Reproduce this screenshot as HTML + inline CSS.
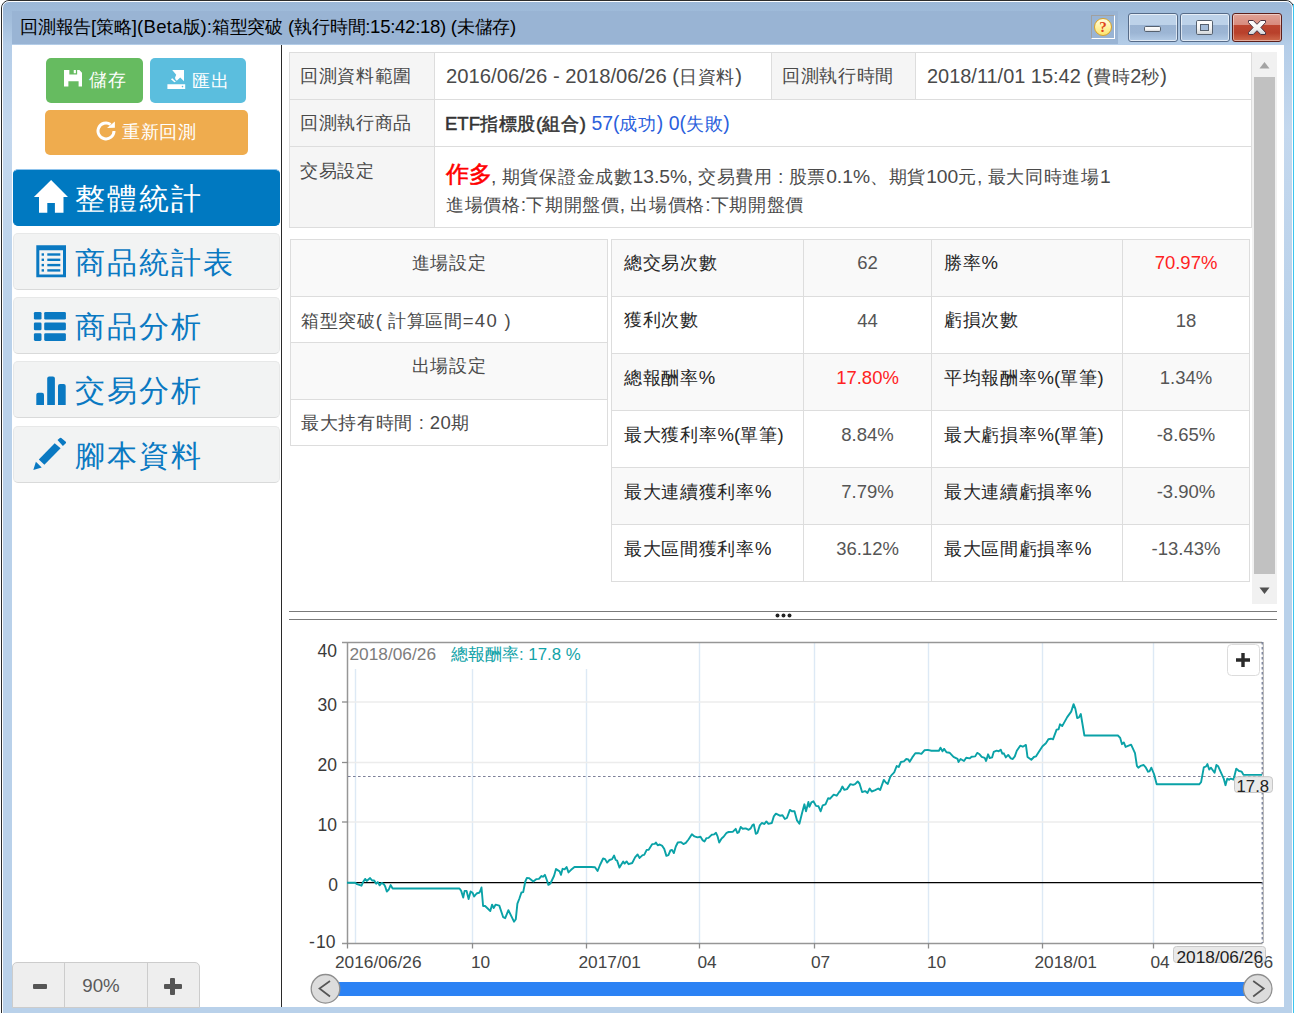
<!DOCTYPE html>
<html lang="zh-Hant">
<head>
<meta charset="utf-8">
<title>回測報告</title>
<style>
*{box-sizing:border-box;margin:0;padding:0}
html,body{width:1294px;height:1013px;overflow:hidden;background:#fff}
body{font-family:"Liberation Sans",sans-serif;color:#333;position:relative}
.abs{position:absolute}
/* ---------- window frame ---------- */
#frame{position:absolute;left:1px;top:0;width:1293px;height:1030px;border:1px solid #2b2b2b;border-radius:8px 8px 0 0;
 background:linear-gradient(180deg,#9bb7d7 0px,#a3bedc 20px,#b4cde8 44px,#c4d8ee 130px,#b9d1ea 330px,#b9d1ea 100%)}
#frame:before{content:"";position:absolute;left:0;top:0;right:0;bottom:0;border:1px solid #fdfeff;border-radius:7px 7px 0 0}
#cap{position:absolute;left:12px;top:11px;width:1106px;height:33px;background:#99b4d4}
#ttl{position:absolute;left:20px;top:14px;height:26px;line-height:26px;font-size:17.5px;color:#000;white-space:nowrap;letter-spacing:-0.25px}
#ttl .e{font-size:18.6px;letter-spacing:0}
#content{position:absolute;left:12px;top:45px;width:1272px;height:962px;background:#fff}
/* caption buttons */
.cb{position:absolute;top:13px;height:29px;width:50px;border:1px solid #566b88;border-radius:3px;
 background:linear-gradient(180deg,#bdd2e9 0,#bdd2e9 40%,#9ab3d2 41%,#9cb5d4 70%,#b3cbe6 100%);box-shadow:inset 0 0 0 1px rgba(255,255,255,.62)}
#bx{background:linear-gradient(180deg,#e0a296 0,#d88b7d 40%,#bd4630 41%,#b8402b 70%,#cf6a4c 100%);border-color:#5d1f1a;box-shadow:inset 0 0 0 1px rgba(255,255,255,.45)}
#help{position:absolute;left:1091px;top:15px;width:24px;height:24px;border:1px solid;border-color:#a0a0a0 #fff #fff #a0a0a0;background:#99b4d4}
#help i{position:absolute;left:2px;top:2px;width:18px;height:18px;border-radius:50%;border:1px solid #dba226;
 background:linear-gradient(180deg,#fffde0 0,#fff3a8 45%,#fde56f 100%);font:bold 15px/17px "Liberation Serif",serif;color:#e0421b;text-align:center;font-style:normal}
/* ---------- sidebar ---------- */
#sidediv{position:absolute;left:281px;top:45px;width:1px;height:962px;background:#2a2a2a}
.btn{position:absolute;height:45px;border-radius:5px;color:#fff;font-size:18px;letter-spacing:.7px;line-height:45px;white-space:nowrap}
.btn span{position:absolute;top:0}
.nav{position:absolute;left:13px;width:267px;height:57px;border-radius:5px;border:1px solid #e7e8e8;border-bottom-color:#d9dada;background:#f2f3f3;color:#0a79c2;font-size:30px;letter-spacing:2px;line-height:57px;white-space:nowrap}
.nav.on{background:#0079c1;border-color:#8fc3ec #0079c1 #0079c1;color:#fff}
.nav span{position:absolute;left:61px;top:0}
.nav svg{position:absolute;left:-1px;top:0}
.nav.on svg{top:-1px}
#zoomc{position:absolute;left:12px;top:962px;width:188px;height:46px;border:1px solid #ccc;border-radius:5px 5px 0 0;background:#eee}
#zoomc div{position:absolute;top:0;height:45px}
</style>
</head>
<body>
<div id="frame"></div>
<div id="cap"></div>
<div id="ttl">回測報告<span class="e">[</span>策略<span class="e" style="letter-spacing:.25px">](Beta</span>版<span class="e">):</span>箱型突破<span class="e"> (</span>執行時間<span class="e" style="letter-spacing:-.3px">:15:42:18) (</span>未儲存<span class="e">)</span></div>
<div id="help"><i>?</i></div>
<div class="cb" id="bmin" style="left:1128px"><svg width="48" height="27" style="position:absolute;left:0;top:0"><defs><linearGradient id="gw" x1="0" y1="0" x2="0" y2="1"><stop offset="0" stop-color="#fff"/><stop offset=".55" stop-color="#f4f4f4"/><stop offset="1" stop-color="#cfd3d8"/></linearGradient></defs><rect x="15.5" y="12.500" width="16" height="5" rx="1.200" fill="url(#gw)" stroke="#55606e" stroke-width="1"/></svg></div>
<div class="cb" id="bmax" style="left:1180px"><svg width="48" height="27" style="position:absolute;left:0;top:0"><rect x="15.500" y="6.500" width="16" height="14" rx="1.200" fill="url(#gw)" stroke="#55606e"/><rect x="19.500" y="10.500" width="8" height="6" fill="#a3bbd8" stroke="#55606e"/></svg></div>
<div class="cb" id="bx" style="left:1232px"><svg width="48" height="27" style="position:absolute;left:0;top:0"><path d="M15.5 6.5H20.3L24 10.3L27.7 6.5H32.5V8.600L27.900 13.500L32.500 18.400V20.500H27.700L24 16.700L20.300 20.500H15.500V18.400L20.100 13.500L15.500 8.600Z" fill="url(#gw)" stroke="#4c3340" stroke-width="1" stroke-linejoin="round"/></svg></div>
<div class="abs" style="left:1293px;top:4px;width:1px;height:1010px;background:#3cc5ef"></div>
<div id="content"></div>
<div id="sidediv"></div>

<!-- sidebar buttons -->
<div class="btn" style="left:46px;top:58px;width:97px;background:#66bb60">
 <svg class="abs" style="left:17.500px;top:12px" width="18.500" height="16.600" viewBox="0 0 19 17"><path d="M0 0H5.500V4.600H13.500V0H15.800L19 3.200V17H15V11.500H4.500V17H0Z M10 0H12.200V3.400H10Z" fill="#fff"/></svg>
 <span style="left:43px">儲存</span></div>
<div class="btn" style="left:150px;top:58px;width:96px;background:#5bbede">
 <svg class="abs" style="left:17px;top:12px" width="19" height="19" viewBox="0 0 19 19"><path d="M5.200 0H17V11.300L13.200 7.600L9.800 10.700L8.500 9.400L8 7.700L9.200 4.700Z M5.300 8.200L8.900 11.800L7.400 12.200L3.900 9.300Z M0.400 14.300H18.200V19H0.400Z" fill="#fff"/><circle cx="15.500" cy="16.600" r="0.800" fill="#5bbede"/></svg>
 <span style="left:42px;top:1px">匯出</span></div>
<div class="btn" style="left:45px;top:110px;width:203px;background:#efac4e">
 <svg class="abs" style="left:51px;top:11.4px" width="20" height="20" viewBox="0 0 20 20"><path d="M18 10A8 8 0 1 1 14.600 3.450" fill="none" stroke="#fff" stroke-width="3"/><path d="M18.900 0.400V6.700L11 7Z" fill="#fff"/></svg>
 <span style="left:77px">重新回測</span></div>

<!-- nav -->
<div class="nav on" style="top:169px"><svg width="70" height="57"><path d="M38.100 11 L55 27.900 H50.500 V43.800 H41.900 V34 H34.300 V43.800 H26 V27.900 H20.900 Z" fill="#fff"/></svg><span>整體統計</span></div>
<div class="nav" style="top:233px"><svg width="70" height="57"><path d="M23.300 11.200H53V43.200H23.300Z M26.300 16.200V40.400H50V16.200Z" fill="#0a79c2" fill-rule="evenodd"/><g fill="#0a79c2"><rect x="28.600" y="19.300" width="2.400" height="2.400"/><rect x="34.300" y="19.300" width="13" height="2.400"/><rect x="28.600" y="24.600" width="2.400" height="2.400"/><rect x="34.300" y="24.600" width="13" height="2.400"/><rect x="28.600" y="29.900" width="2.400" height="2.400"/><rect x="34.300" y="29.900" width="13" height="2.400"/><rect x="28.600" y="35.200" width="2.400" height="2.400"/><rect x="34.300" y="35.200" width="13" height="2.400"/></g></svg><span>商品統計表</span></div>
<div class="nav" style="top:297px"><svg width="70" height="57"><g fill="#0a79c2"><rect x="20.900" y="14" width="7.600" height="7.600" rx="1.300"/><rect x="31.200" y="14" width="21.700" height="7.600" rx="1.300"/><rect x="20.900" y="24.500" width="7.600" height="7.800" rx="1.300"/><rect x="31.200" y="24.500" width="21.700" height="7.800" rx="1.300"/><rect x="20.900" y="35.200" width="7.600" height="7.700" rx="1.300"/><rect x="31.200" y="35.200" width="21.700" height="7.700" rx="1.300"/></g></svg><span>商品分析</span></div>
<div class="nav" style="top:361px"><svg width="70" height="57"><g fill="#0a79c2"><path d="M23.300 43.100V32.800Q23.300 30.800 25.300 30.800H29Q31 30.800 31 32.800V43.100Z"/><path d="M34.200 43.100V16.400Q34.200 14.400 36.200 14.400H39.900Q41.900 14.400 41.900 16.400V43.100Z"/><path d="M45 43.100V24.100Q45 22.100 47 22.100H50.700Q52.700 22.100 52.700 24.100V43.100Z"/></g></svg><span>交易分析</span></div>
<div class="nav" style="top:426px"><svg width="70" height="57" style="top:-1px"><g fill="#0a79c2"><path d="M20.300 43.900L22.900 35.800L28.700 41.500Z"/><path d="M25.800 33.400L41.700 17.200L47.600 22.300L31.400 38.800Z"/><path d="M44.500 14L46.900 11.900Q47.600 11.400 48.300 12L52.800 15.800Q53.400 16.500 52.800 17.200L49.900 20.100Z"/></g></svg><span>腳本資料</span></div>

<!-- zoom control -->
<div id="zoomc">
 <div style="left:51px;width:1px;background:#ccc"></div>
 <div style="left:134px;width:1px;background:#ccc"></div>
 <div style="left:19.500px;top:21px;width:14.500px;height:5px;background:#555;border-radius:1px"></div>
 <div style="left:47px;width:82px;text-align:center;font-size:18.700px;line-height:46px;color:#5a5a5a">90%</div>
 <div style="left:150.800px;top:21px;width:18px;height:5px;background:#555;border-radius:1px"></div>
 <div style="left:157.300px;top:15px;width:5px;height:17px;background:#555;border-radius:1px"></div>
</div>

<!--MAIN-->

<style>
/* ---------- tables ---------- */
.t{position:absolute;border:1px solid #ddd;background:#fff}
.c{position:absolute;font-size:17.6px;letter-spacing:.7px;white-space:nowrap;color:#4a4a4a;overflow:hidden}
.c.l{background:#f5f5f5}
.c.h{background:#f9f9f9;text-align:center}
.c.s{background:#f9f9f9}
.e{letter-spacing:0;font-size:18.5px}
.tt .e{font-size:20.25px}
#V2 .e{font-size:19.95px}
.tt .r3 .e{font-size:19.25px}
.tt b.k .e{font-size:18.5px}
.tt .blue .e{font-size:19.4px}
.ls .e{letter-spacing:.4px}
.bl{border-left:1px solid #ddd}.bt{border-top:1px solid #ddd}
.c span.x{position:absolute;left:10px}
.k{font-weight:normal;color:#262626}
b.k{font-weight:normal;color:#333;-webkit-text-stroke:.5px #333}
.v{text-align:center;color:#555}
.red{color:#f22}
.blue{color:#2a60dc}
#sbt{position:absolute;left:1252px;top:52px;width:25px;height:552px;background:#f1f1f1}
#sbth{position:absolute;left:1254px;top:77px;width:21px;height:497px;background:#c1c1c1}
.ln{position:absolute;left:289px;width:988px;height:1px;background:#7a7a7a}
</style>
<div class="t tt" style="left:289px;top:52px;width:963px;height:176px">
<div class="c l" style="left:0px;top:0px;width:144px;height:46px;line-height:46px;"><span class="x">回測資料範圍</span></div>
<div class="c bl" style="left:144px;top:0px;width:337px;height:46px;line-height:46px;"><span class="x" id="V1" style="left:11px"><span class="e">2016/06/26 - 2018/06/26 (</span>日資料<span class="e">)</span></span></div>
<div class="c l bl" style="left:481px;top:0px;width:144px;height:46px;line-height:46px;"><span class="x">回測執行時間</span></div>
<div class="c bl" style="left:625px;top:0px;width:336px;height:46px;line-height:46px;"><span class="x" id="V2" style="left:11px"><span class="e">2018/11/01 15:42 (</span>費時<span class="e">2</span>秒<span class="e">)</span></span></div>
<div class="c l bt" style="left:0px;top:46px;width:144px;height:47px;line-height:47px;"><span class="x">回測執行商品</span></div>
<div class="c bl bt" style="left:144px;top:46px;width:817px;height:47px;line-height:47px;"><span class="x" style="left:10px"><b class="k"><span class="e">ETF</span>指標股<span class="e">(</span>組合<span class="e">)</span></b> <span class="blue"><span class="e">57(</span>成功<span class="e">) 0(</span>失敗<span class="e">)</span></span></span></div>
<div class="c l bt" style="left:0px;top:93px;width:144px;height:81px;line-height:81px;"><span class="x" style="top:10px;line-height:28px">交易設定</span></div>
<div class="c bl bt r3" style="left:144px;top:93px;width:817px;height:81px;line-height:81px;"><span class="x" style="left:11px;top:15px;line-height:27px"><b style="color:#f00;font-size:23px;letter-spacing:-.5px;position:relative;top:-1px;font-weight:normal;-webkit-text-stroke:.55px #f00">作多</b><span class="e">, </span>期貨保證金成數<span class="e">13.5%, </span>交易費用<span class="e"> : </span>股票<span class="e">0.1%</span>、期貨<span class="e">100</span>元<span class="e">, </span>最大同時進場<span class="e">1</span><br>進場價格<span class="e">:</span>下期開盤價<span class="e">, </span>出場價格<span class="e">:</span>下期開盤價</span></div>
</div>
<div class="t ls" style="left:290px;top:239px;width:318px;height:207px">
<div class="c h" style="left:0px;top:0px;width:316px;height:56px;line-height:56px;"><span style="position:relative;top:-5px">進場設定</span></div>
<div class="c bt" style="left:0px;top:56px;width:316px;height:46px;line-height:46px;"><span class="x" style="top:1px">箱型突破<span class="e">( </span>計算區間<span class="e" style="letter-spacing:1.3px">=40 )</span></span></div>
<div class="c h bt" style="left:0px;top:102px;width:316px;height:57px;line-height:57px;"><span style="position:relative;top:-5px">出場設定</span></div>
<div class="c bt" style="left:0px;top:159px;width:316px;height:46px;line-height:46px;"><span class="x">最大持有時間<span class="e"> : 20</span>期</span></div>
</div>
<div class="t" style="left:611px;top:239px;width:639px;height:343px">
<div class="c k s" style="left:0px;top:0px;width:191px;height:56px;line-height:56px;"><span class="x" style="left:12px;top:-5px">總交易次數</span></div>
<div class="c v bl s" style="left:191px;top:0px;width:128px;height:56px;line-height:56px;"><span style="position:relative;top:-5px"><span class="e">62</span></span></div>
<div class="c k bl s" style="left:319px;top:0px;width:191px;height:56px;line-height:56px;"><span class="x" style="left:12px;top:-5px">勝率<span class="e">%</span></span></div>
<div class="c v bl s red" style="left:510px;top:0px;width:127px;height:56px;line-height:56px;"><span style="position:relative;top:-5px"><span class="e">70.97%</span></span></div>
<div class="c k bt" style="left:0px;top:56px;width:191px;height:57px;line-height:57px;"><span class="x" style="left:12px;top:-5px">獲利次數</span></div>
<div class="c v bl bt" style="left:191px;top:56px;width:128px;height:57px;line-height:57px;"><span style="position:relative;top:-5px"><span class="e">44</span></span></div>
<div class="c k bl bt" style="left:319px;top:56px;width:191px;height:57px;line-height:57px;"><span class="x" style="left:12px;top:-5px">虧損次數</span></div>
<div class="c v bl bt" style="left:510px;top:56px;width:127px;height:57px;line-height:57px;"><span style="position:relative;top:-5px"><span class="e">18</span></span></div>
<div class="c k s bt" style="left:0px;top:113px;width:191px;height:57px;line-height:57px;"><span class="x" style="left:12px;top:-5px">總報酬率<span class="e">%</span></span></div>
<div class="c v bl s bt red" style="left:191px;top:113px;width:128px;height:57px;line-height:57px;"><span style="position:relative;top:-5px"><span class="e">17.80%</span></span></div>
<div class="c k bl s bt" style="left:319px;top:113px;width:191px;height:57px;line-height:57px;"><span class="x" style="left:12px;top:-5px">平均報酬率<span class="e">%(</span>單筆<span class="e">)</span></span></div>
<div class="c v bl s bt" style="left:510px;top:113px;width:127px;height:57px;line-height:57px;"><span style="position:relative;top:-5px"><span class="e">1.34%</span></span></div>
<div class="c k bt" style="left:0px;top:170px;width:191px;height:57px;line-height:57px;"><span class="x" style="left:12px;top:-5px">最大獲利率<span class="e">%(</span>單筆<span class="e">)</span></span></div>
<div class="c v bl bt" style="left:191px;top:170px;width:128px;height:57px;line-height:57px;"><span style="position:relative;top:-5px"><span class="e">8.84%</span></span></div>
<div class="c k bl bt" style="left:319px;top:170px;width:191px;height:57px;line-height:57px;"><span class="x" style="left:12px;top:-5px">最大虧損率<span class="e">%(</span>單筆<span class="e">)</span></span></div>
<div class="c v bl bt" style="left:510px;top:170px;width:127px;height:57px;line-height:57px;"><span style="position:relative;top:-5px"><span class="e">-8.65%</span></span></div>
<div class="c k s bt" style="left:0px;top:227px;width:191px;height:57px;line-height:57px;"><span class="x" style="left:12px;top:-5px">最大連續獲利率<span class="e">%</span></span></div>
<div class="c v bl s bt" style="left:191px;top:227px;width:128px;height:57px;line-height:57px;"><span style="position:relative;top:-5px"><span class="e">7.79%</span></span></div>
<div class="c k bl s bt" style="left:319px;top:227px;width:191px;height:57px;line-height:57px;"><span class="x" style="left:12px;top:-5px">最大連續虧損率<span class="e">%</span></span></div>
<div class="c v bl s bt" style="left:510px;top:227px;width:127px;height:57px;line-height:57px;"><span style="position:relative;top:-5px"><span class="e">-3.90%</span></span></div>
<div class="c k bt" style="left:0px;top:284px;width:191px;height:57px;line-height:57px;"><span class="x" style="left:12px;top:-5px">最大區間獲利率<span class="e">%</span></span></div>
<div class="c v bl bt" style="left:191px;top:284px;width:128px;height:57px;line-height:57px;"><span style="position:relative;top:-5px"><span class="e">36.12%</span></span></div>
<div class="c k bl bt" style="left:319px;top:284px;width:191px;height:57px;line-height:57px;"><span class="x" style="left:12px;top:-5px">最大區間虧損率<span class="e">%</span></span></div>
<div class="c v bl bt" style="left:510px;top:284px;width:127px;height:57px;line-height:57px;"><span style="position:relative;top:-5px"><span class="e">-13.43%</span></span></div>
</div>
<div id="sbt"></div><div id="sbth"></div>
<svg class="abs" style="left:1253px;top:52px" width="24" height="552"><path d="M6.5 16.5L11.5 10L16.5 16.5Z" fill="#a3a3a3"/><path d="M6.5 535.5L11.5 542L16.5 535.5Z" fill="#505050"/></svg>
<div class="ln" style="top:611px"></div><div class="ln" style="top:619px"></div>
<svg class="abs" style="left:770px;top:612px" width="28" height="7"><circle cx="7.5" cy="3.5" r="1.95" fill="#222"/><circle cx="13.5" cy="3.5" r="1.95" fill="#222"/><circle cx="19.5" cy="3.5" r="1.95" fill="#222"/></svg>
<svg class="abs" style="left:289px;top:625px" width="995" height="382" viewBox="289 625 995 382" font-family="Liberation Sans, sans-serif">
<line x1="355.5" y1="642" x2="355.5" y2="943" stroke="#dde9f5" stroke-width="1.4"/>
<line x1="472.5" y1="642" x2="472.5" y2="943" stroke="#dde9f5" stroke-width="1.4"/>
<line x1="586.5" y1="642" x2="586.5" y2="943" stroke="#dde9f5" stroke-width="1.4"/>
<line x1="699.5" y1="642" x2="699.5" y2="943" stroke="#dde9f5" stroke-width="1.4"/>
<line x1="814.5" y1="642" x2="814.5" y2="943" stroke="#dde9f5" stroke-width="1.4"/>
<line x1="928.5" y1="642" x2="928.5" y2="943" stroke="#dde9f5" stroke-width="1.4"/>
<line x1="1042.5" y1="642" x2="1042.5" y2="943" stroke="#dde9f5" stroke-width="1.4"/>
<line x1="1153.5" y1="642" x2="1153.5" y2="943" stroke="#dde9f5" stroke-width="1.4"/>
<line x1="348" y1="702" x2="1262" y2="702" stroke="#ececec" stroke-width="1.6"/>
<line x1="348" y1="762.5" x2="1262" y2="762.5" stroke="#ececec" stroke-width="1.6"/>
<line x1="348" y1="822" x2="1262" y2="822" stroke="#ececec" stroke-width="1.6"/>
<rect x="349" y="643" width="240" height="26" fill="#fff"/>
<line x1="348" y1="882.7" x2="1262" y2="882.7" stroke="#000" stroke-width="1.3"/>
<path d="M342 642.5H1262 M347.5 642V943.5 M342 943.5H1262.5" stroke="#969696" stroke-width="1.5" fill="none"/>
<line x1="342" y1="702" x2="348" y2="702" stroke="#8c8c8c" stroke-width="1.3"/>
<line x1="342" y1="762.5" x2="348" y2="762.5" stroke="#8c8c8c" stroke-width="1.3"/>
<line x1="342" y1="822" x2="348" y2="822" stroke="#8c8c8c" stroke-width="1.3"/>
<line x1="347.5" y1="943" x2="347.5" y2="948.5" stroke="#8c8c8c" stroke-width="1.3"/>
<line x1="472.5" y1="943" x2="472.5" y2="948.5" stroke="#8c8c8c" stroke-width="1.3"/>
<line x1="586.5" y1="943" x2="586.5" y2="948.5" stroke="#8c8c8c" stroke-width="1.3"/>
<line x1="699.5" y1="943" x2="699.5" y2="948.5" stroke="#8c8c8c" stroke-width="1.3"/>
<line x1="814.5" y1="943" x2="814.5" y2="948.5" stroke="#8c8c8c" stroke-width="1.3"/>
<line x1="928.5" y1="943" x2="928.5" y2="948.5" stroke="#8c8c8c" stroke-width="1.3"/>
<line x1="1042.5" y1="943" x2="1042.5" y2="948.5" stroke="#8c8c8c" stroke-width="1.3"/>
<line x1="1153.5" y1="943" x2="1153.5" y2="948.5" stroke="#8c8c8c" stroke-width="1.3"/>
<line x1="1263.3" y1="642" x2="1263.3" y2="943" stroke="#b4b4b4" stroke-width="1.2"/>
<line x1="348" y1="776.5" x2="1262" y2="776.5" stroke="#5d6080" stroke-opacity=".8" stroke-width="1" stroke-dasharray="2.6 2.4"/>
<line x1="1262.2" y1="642" x2="1262.2" y2="943" stroke="#5d6888" stroke-width="1.1" stroke-dasharray="2.6 2.4"/>
<path d="M347 882.7 L355.1 882.7 L357.1 884.1 L361.5 885.7 L363.1 882.1 L365.1 878.9 L366.7 880.9 L370.1 878.1 L372.1 880.5 L374.2 880.5 L376.2 883.7 L377.8 882.1 L379.6 885.3 L381.6 882.9 L383.8 884.1 L385.2 886.5 L386.8 891.5 L388.8 889.5 L390.6 885.1 L392.6 888.5 L459.5 888.5 L461.2 890.9 L463.2 897.5 L464.6 890.9 L466.6 890.9 L468.6 899.1 L470.6 891.5 L472.6 892.9 L474.2 896.5 L476.6 893.5 L479.6 892.5 L481.5 887.5 L483.1 906 L485.1 906 L490.3 911 L492.1 904.6 L493.7 908 L495.7 904.6 L499.3 905.6 L503.2 917.2 L505.2 918.2 L508.4 910.2 L514 921.7 L515.8 919.2 L517.4 903.6 L519.4 898.5 L521.4 892.5 L523.2 892.1 L525.3 881.5 L526.9 877.9 L528.9 878.1 L533.3 881.5 L536.5 879.1 L538.9 878.9 L541.5 876 L542.9 876.8 L544.9 874.8 L547 880.5 L548.4 884.9 L550.4 883.5 L554 876 L556 869 L559.6 871.4 L561 874.8 L562.6 868.8 L564.6 869.4 L566.6 867 L568.5 872.4 L571.1 869.8 L574.5 867 L591.2 867 L595 867.2 L597.6 871 L600 865 L603.1 858.5 L605.1 859.1 L607.1 862.6 L609.5 860 L612.1 859.1 L614.1 855.5 L615.7 860 L617.1 860.6 L619.5 867.6 L623.2 861.6 L624.6 863.6 L626.6 861.4 L628.6 864.2 L632.2 863 L635.2 857.1 L637.6 854.5 L639.6 857.9 L642.6 855.1 L644.2 854.9 L646.7 849.9 L648.7 849.7 L652.3 844.1 L654.7 843.9 L655.9 842.5 L657.7 845.3 L659.7 844.5 L662.3 845.9 L664.3 849.1 L666.4 855.9 L668.4 855.1 L670.4 850.5 L672 849.9 L673.8 853.1 L675.8 846.5 L677.8 842.5 L680.8 842.1 L683.4 844.1 L685.8 842.9 L688.5 839.5 L691.9 834.2 L694.5 836.4 L697.5 837.4 L700.5 836.8 L702.5 840.1 L704.5 841.5 L706.5 838.1 L708.5 837.9 L711.6 834.8 L714 834.4 L716 832.8 L717.6 836.4 L719.2 842.5 L721.6 838.5 L723.6 836.8 L726.6 832.8 L728.6 832 L732.7 831.8 L735.7 828.8 L737.3 833 L738.7 832.4 L740.7 827 L742.7 828.8 L745.7 828.4 L748.7 829.8 L750.7 828.4 L752.3 825.4 L753.8 824.4 L755.8 833.8 L757.4 833 L759.8 825.4 L761.8 823 L764.4 824 L766.4 821.4 L768.4 823.8 L771.8 823 L773.8 816.4 L775.9 813.7 L777.9 814.7 L779.9 815.7 L782.5 815.3 L784.9 819 L786.9 818 L789.9 809.9 L791.9 811.3 L794.5 811.3 L797 820.4 L799.4 823.8 L802 813.3 L804.4 804.3 L806 811.3 L808.4 801.9 L809.4 806.9 L811.4 802.3 L813.4 801.3 L816 805.9 L818.5 806.3 L820.7 811.3 L822.7 805.3 L825.5 804.3 L828.1 798.3 L830.1 798.7 L833.7 794.7 L836.7 795.7 L839.7 791.2 L840 791.5 L842.4 786.5 L844.4 789.9 L847 789.1 L850.4 784.1 L853.1 784.9 L855.1 784.1 L857.7 781.5 L859.5 783.5 L862.1 792.1 L865.1 791.1 L867.5 792.9 L869.7 788.5 L871.7 791.5 L875.2 790.1 L878.2 788.5 L880.2 789.9 L883.8 779.9 L885.8 782.5 L887.8 783.9 L890.2 777 L891.8 774.8 L894.2 772.4 L896.7 766 L898.7 767 L900.9 762 L903.9 761.4 L906.3 759 L908.3 759.4 L909.7 761.8 L912.3 757.4 L915.3 753.3 L919.4 753.3 L921.4 753.9 L924.4 750.3 L927.8 749.9 L931.4 750.7 L938.9 750.7 L940.5 747.7 L942.5 751.3 L944.1 748.9 L946.5 752.3 L949.5 752.7 L953.5 756.8 L957.5 758.8 L958.5 762 L960.6 759 L964 761 L966.2 757.8 L969.6 758.4 L971.6 756.8 L975.2 756.4 L977.2 752.9 L979.6 754.3 L981.7 756.8 L984.7 757.8 L986.1 761 L988.1 754.3 L989.7 758 L992.1 757.4 L993.7 751.9 L996.7 750.7 L998.7 751.3 L1000.7 749.7 L1002.3 753.7 L1003.8 753.3 L1005.8 757.4 L1008.2 754.9 L1010.8 758.4 L1012.8 759 L1014.8 756.4 L1016.8 750.7 L1020.2 745.7 L1022.8 746.7 L1025.9 744.9 L1027.5 757 L1031.3 759.8 L1033.9 757 L1035.9 756.4 L1038.9 751.7 L1042.5 746.3 L1045.9 743.3 L1048.4 739.3 L1051 738.7 L1053 739.3 L1056.6 729.6 L1058.6 729.2 L1060 724.3 L1062.2 726.1 L1067.2 717.1 L1071.2 711.6 L1073.6 704.1 L1075.4 708.9 L1077.2 718 L1079 717.4 L1080.8 714 L1084.4 735.5 L1117.9 735.5 L1120.2 737.9 L1122 744.2 L1123.8 742.4 L1125.6 746.9 L1131.1 744.7 L1135 753.2 L1136.9 765.9 L1138.3 767.7 L1140.5 765.9 L1143.7 765 L1145.9 767.7 L1148.1 771.7 L1149.5 771.3 L1151.3 767.7 L1154 774 L1156.7 784.3 L1199.2 784.3 L1201.1 782.2 L1203.8 767.3 L1206.1 766.4 L1207.4 764.1 L1209.2 769.5 L1211 767.7 L1214.6 772.8 L1216.4 765 L1218.2 766.3 L1223.7 778.6 L1225.5 785.2 L1227.3 778.6 L1229.1 779.8 L1230.5 778.6 L1233.6 779.5 L1236.3 768.6 L1239 771 L1241.7 771.7 L1243.5 774.9 L1262 774.9" fill="none" stroke="#0aa2a7" stroke-width="1.9" stroke-linejoin="round"/>
<text x="337" y="657" text-anchor="end" font-size="17.5" fill="#3a3a3a">40</text>
<text x="337" y="710.5" text-anchor="end" font-size="17.5" fill="#3a3a3a">30</text>
<text x="337" y="771" text-anchor="end" font-size="17.5" fill="#3a3a3a">20</text>
<text x="337" y="831" text-anchor="end" font-size="17.5" fill="#3a3a3a">10</text>
<text x="338" y="891" text-anchor="end" font-size="17.5" fill="#3a3a3a">0</text>
<text x="337" y="947.5" text-anchor="end" font-size="17.5" fill="#3a3a3a"><tspan dx="-1.5" letter-spacing="1.2">-</tspan>10</text>
<text x="335" y="967.5" font-size="17.3" fill="#444">2016/06/26</text>
<text x="471" y="967.5" font-size="17.3" fill="#444">10</text>
<text x="578.5" y="967.5" font-size="17.3" fill="#444">2017/01</text>
<text x="697.5" y="967.5" font-size="17.3" fill="#444">04</text>
<text x="811" y="967.5" font-size="17.3" fill="#444">07</text>
<text x="927" y="967.5" font-size="17.3" fill="#444">10</text>
<text x="1034.5" y="967.5" font-size="17.3" fill="#444">2018/01</text>
<text x="1150.5" y="967.5" font-size="17.3" fill="#444">04</text>
<text x="1254" y="967.5" font-size="17.3" fill="#444">06</text>
<text x="349.5" y="660" font-size="17.3" fill="#7d7d7d">2018/06/26</text>
<text x="451" y="660" font-size="17.3" fill="#12a3a8">總報酬率<tspan font-size="16.8">: 17.8 %</tspan></text>
<rect x="1234.5" y="776.7" width="38" height="15.8" rx="3.2" fill="#e9e9e9" stroke="#c2c2c2" stroke-width=".9"/>
<text x="1236.6" y="791.6" font-size="16.7" fill="#222">17.8</text>
<rect x="1173.5" y="946.5" width="92" height="16" rx="3" fill="#e9e9e9" stroke="#c8c8c8"/>
<text x="1176.5" y="962.8" font-size="17.3" fill="#222">2018/06/26</text>
<rect x="1227.5" y="644.5" width="32" height="31" rx="4" fill="#fff" stroke="#dcdcdc"/>
<path d="M1236 660H1250 M1243 653V667" stroke="#2a2a2a" stroke-width="3.4"/>
<rect x="326" y="982" width="932" height="14" fill="#2b82f4"/>
<circle cx="325.5" cy="988.8" r="14.3" fill="#dcdcdc" stroke="#8e8e8e" stroke-width="1.3"/>
<path d="M330 981L319.5 988.5L330 996.5" fill="none" stroke="#555" stroke-width="1.7"/>
<circle cx="1257.7" cy="988.8" r="14.3" fill="#dcdcdc" stroke="#8e8e8e" stroke-width="1.3"/>
<path d="M1253.2 981L1263.7 988.5L1253.2 996.5" fill="none" stroke="#555" stroke-width="1.7"/>
</svg>
<!--/MAIN-->
</body>
</html>
